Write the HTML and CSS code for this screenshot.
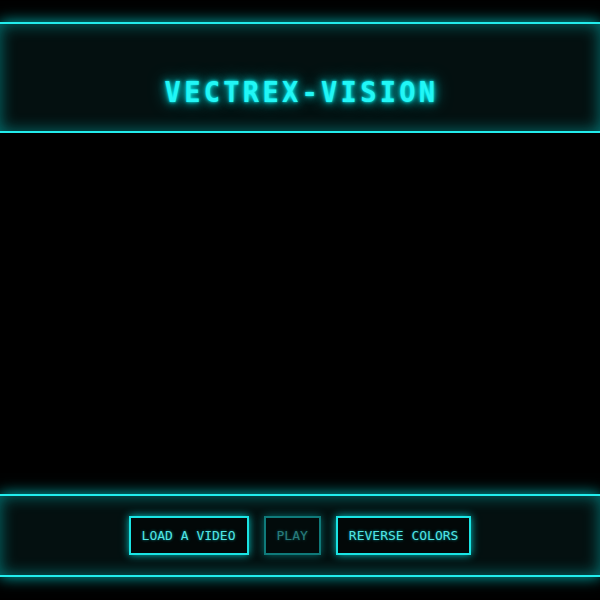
FILE: index.html
```html
<!DOCTYPE html>
<html lang="en">
<head>
<meta charset="utf-8">
<title>Vectrex-Vision</title>
<link rel="stylesheet" href="styles.css">
</head>
<body>
<div class="app">
  <header class="top-bar">
    <h1 class="title">VECTREX-VISION</h1>
  </header>
  <main class="screen"></main>
  <footer class="controls">
    <button class="btn">LOAD A VIDEO</button>
    <button class="btn btn-disabled" disabled>PLAY</button>
    <button class="btn">REVERSE COLORS</button>
  </footer>
</div>
</body>
</html>
```
FILE: styles.css
```css
html, body {
  margin: 0;
  padding: 0;
  background: #000;
  height: 100%;
}

.app {
  box-sizing: border-box;
  height: 600px;
  padding: 22px 0 23px;
  display: flex;
  flex-direction: column;
  font-family: "DejaVu Sans Mono", monospace;
}

.top-bar,
.controls {
  background: #041010;
  border-top: 2px solid #22ecec;
  border-bottom: 2px solid #22ecec;
  box-shadow: 0 0 14px rgba(0, 235, 235, 0.75),
              inset 0 0 16px rgba(0, 230, 230, 0.45);
}

.top-bar {
  height: 107px;
  box-sizing: content-box;
  display: flex;
  justify-content: center;
  align-items: flex-start;
}

.title {
  margin: 52px 0 0 3px;
  font-size: 27px;
  font-weight: bold;
  letter-spacing: 3.3px;
  color: #22f6f6;
  transform: scaleY(1.08);
  text-shadow: 0 0 3px rgba(0, 255, 255, 1), 0 0 8px rgba(0, 255, 255, 0.85), 0 0 16px rgba(0, 255, 255, 0.55);
}

.screen {
  flex: 1;
  background: #000;
}

.controls {
  height: 79px;
  box-sizing: content-box;
  display: flex;
  justify-content: center;
  align-items: center;
  gap: 15px;
}

.btn {
  font-family: "DejaVu Sans Mono", monospace;
  font-size: 13px;
  line-height: 15px;
  padding: 10px 11px;
  background: #020808;
  color: #52e6e6;
  border: 2px solid #1ae4e4;
  box-shadow: 0 0 8px rgba(0, 235, 235, 0.8);
  text-shadow: 0 0 3px rgba(0, 230, 230, 0.6);
  border-radius: 0;
  cursor: pointer;
}

.btn-disabled {
  opacity: 0.5;
  cursor: default;
}
```
